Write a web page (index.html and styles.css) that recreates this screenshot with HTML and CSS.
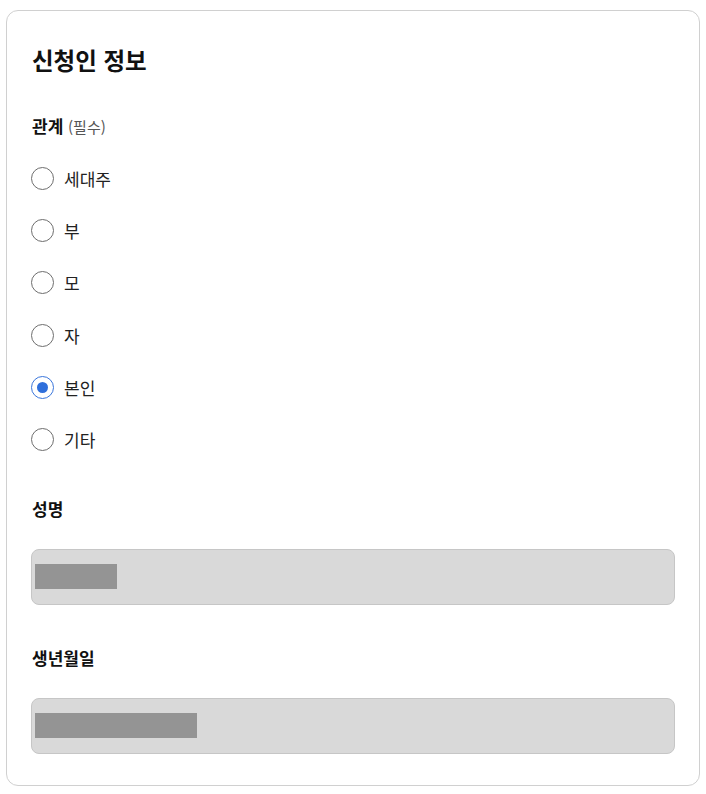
FILE: index.html
```html
<!DOCTYPE html>
<html lang="ko">
<head>
    <meta charset="UTF-8">
    <meta name="viewport" content="width=device-width, initial-scale=1.0">
    <title>신청인 정보</title>
    <link rel="stylesheet" href="styles.css">
</head>
<body>
    <section class="card">
        <h2 class="card-title">신청인 정보</h2>

        <div class="relation">
            <div class="field-label">관계 <span class="required">(필수)</span></div>
            <div class="radio-list" role="radiogroup">
                <label class="radio-row"><input type="radio" name="relation" value="head"><span>세대주</span></label>
                <label class="radio-row"><input type="radio" name="relation" value="father"><span>부</span></label>
                <label class="radio-row"><input type="radio" name="relation" value="mother"><span>모</span></label>
                <label class="radio-row"><input type="radio" name="relation" value="child"><span>자</span></label>
                <label class="radio-row"><input type="radio" name="relation" value="self" checked><span>본인</span></label>
                <label class="radio-row"><input type="radio" name="relation" value="etc"><span>기타</span></label>
            </div>
        </div>

        <div class="field">
            <div class="field-label">성명</div>
            <div class="readonly-input"><span class="mask mask-name"></span></div>
        </div>

        <div class="field">
            <div class="field-label">생년월일</div>
            <div class="readonly-input"><span class="mask mask-date"></span></div>
        </div>
    </section>
</body>
</html>
```

FILE: styles.css
```css
* {
    margin: 0;
    padding: 0;
    box-sizing: border-box;
}
body {
    font-family: "Noto Sans CJK KR", "Noto Sans", sans-serif;
    background-color: #fff;
    color: #111;
    padding: 10px 6px;
}
.card {
    border: 1px solid #d0d0d0;
    border-radius: 12px;
    padding: 34px 24px 31px;
}
.card-title {
    font-size: 23.5px;
    font-weight: 700;
    line-height: 31px;
    margin-left: 1px;
}
.relation {
    margin-top: 38px;
}
.field-label {
    font-size: 17px;
    font-weight: 700;
    line-height: 24px;
    margin-left: 1px;
}
.relation .field-label {
    margin-bottom: 27px;
}
.required {
    font-size: 15px;
    font-weight: 400;
    color: #555;
}
.radio-list {
    display: flex;
    flex-direction: column;
    gap: 28.4px;
}
.radio-row {
    display: flex;
    align-items: center;
    gap: 10px;
    height: 24px;
    font-size: 17px;
    color: #222;
    cursor: pointer;
}
.radio-row input {
    appearance: none;
    width: 23px;
    height: 23px;
    border: 1px solid #6e6e6e;
    border-radius: 50%;
    background: #fff;
    display: grid;
    place-content: center;
    margin: 0;
}
.radio-row input:checked {
    border-color: #3a76dc;
}
.radio-row input:checked::before {
    content: "";
    width: 11px;
    height: 11px;
    border-radius: 50%;
    background: #2f6fdb;
}
.field {
    margin-top: 45px;
}
.field + .field {
    margin-top: 41px;
}
.field .field-label {
    margin-bottom: 28px;
}
.readonly-input {
    height: 56px;
    background: #d9d9d9;
    border: 1px solid #c6c6c6;
    border-radius: 8px;
    padding: 14px 3px;
}
.mask {
    display: block;
    height: 25px;
    background: #949494;
}
.mask-name {
    width: 82px;
}
.mask-date {
    width: 162px;
}
```
